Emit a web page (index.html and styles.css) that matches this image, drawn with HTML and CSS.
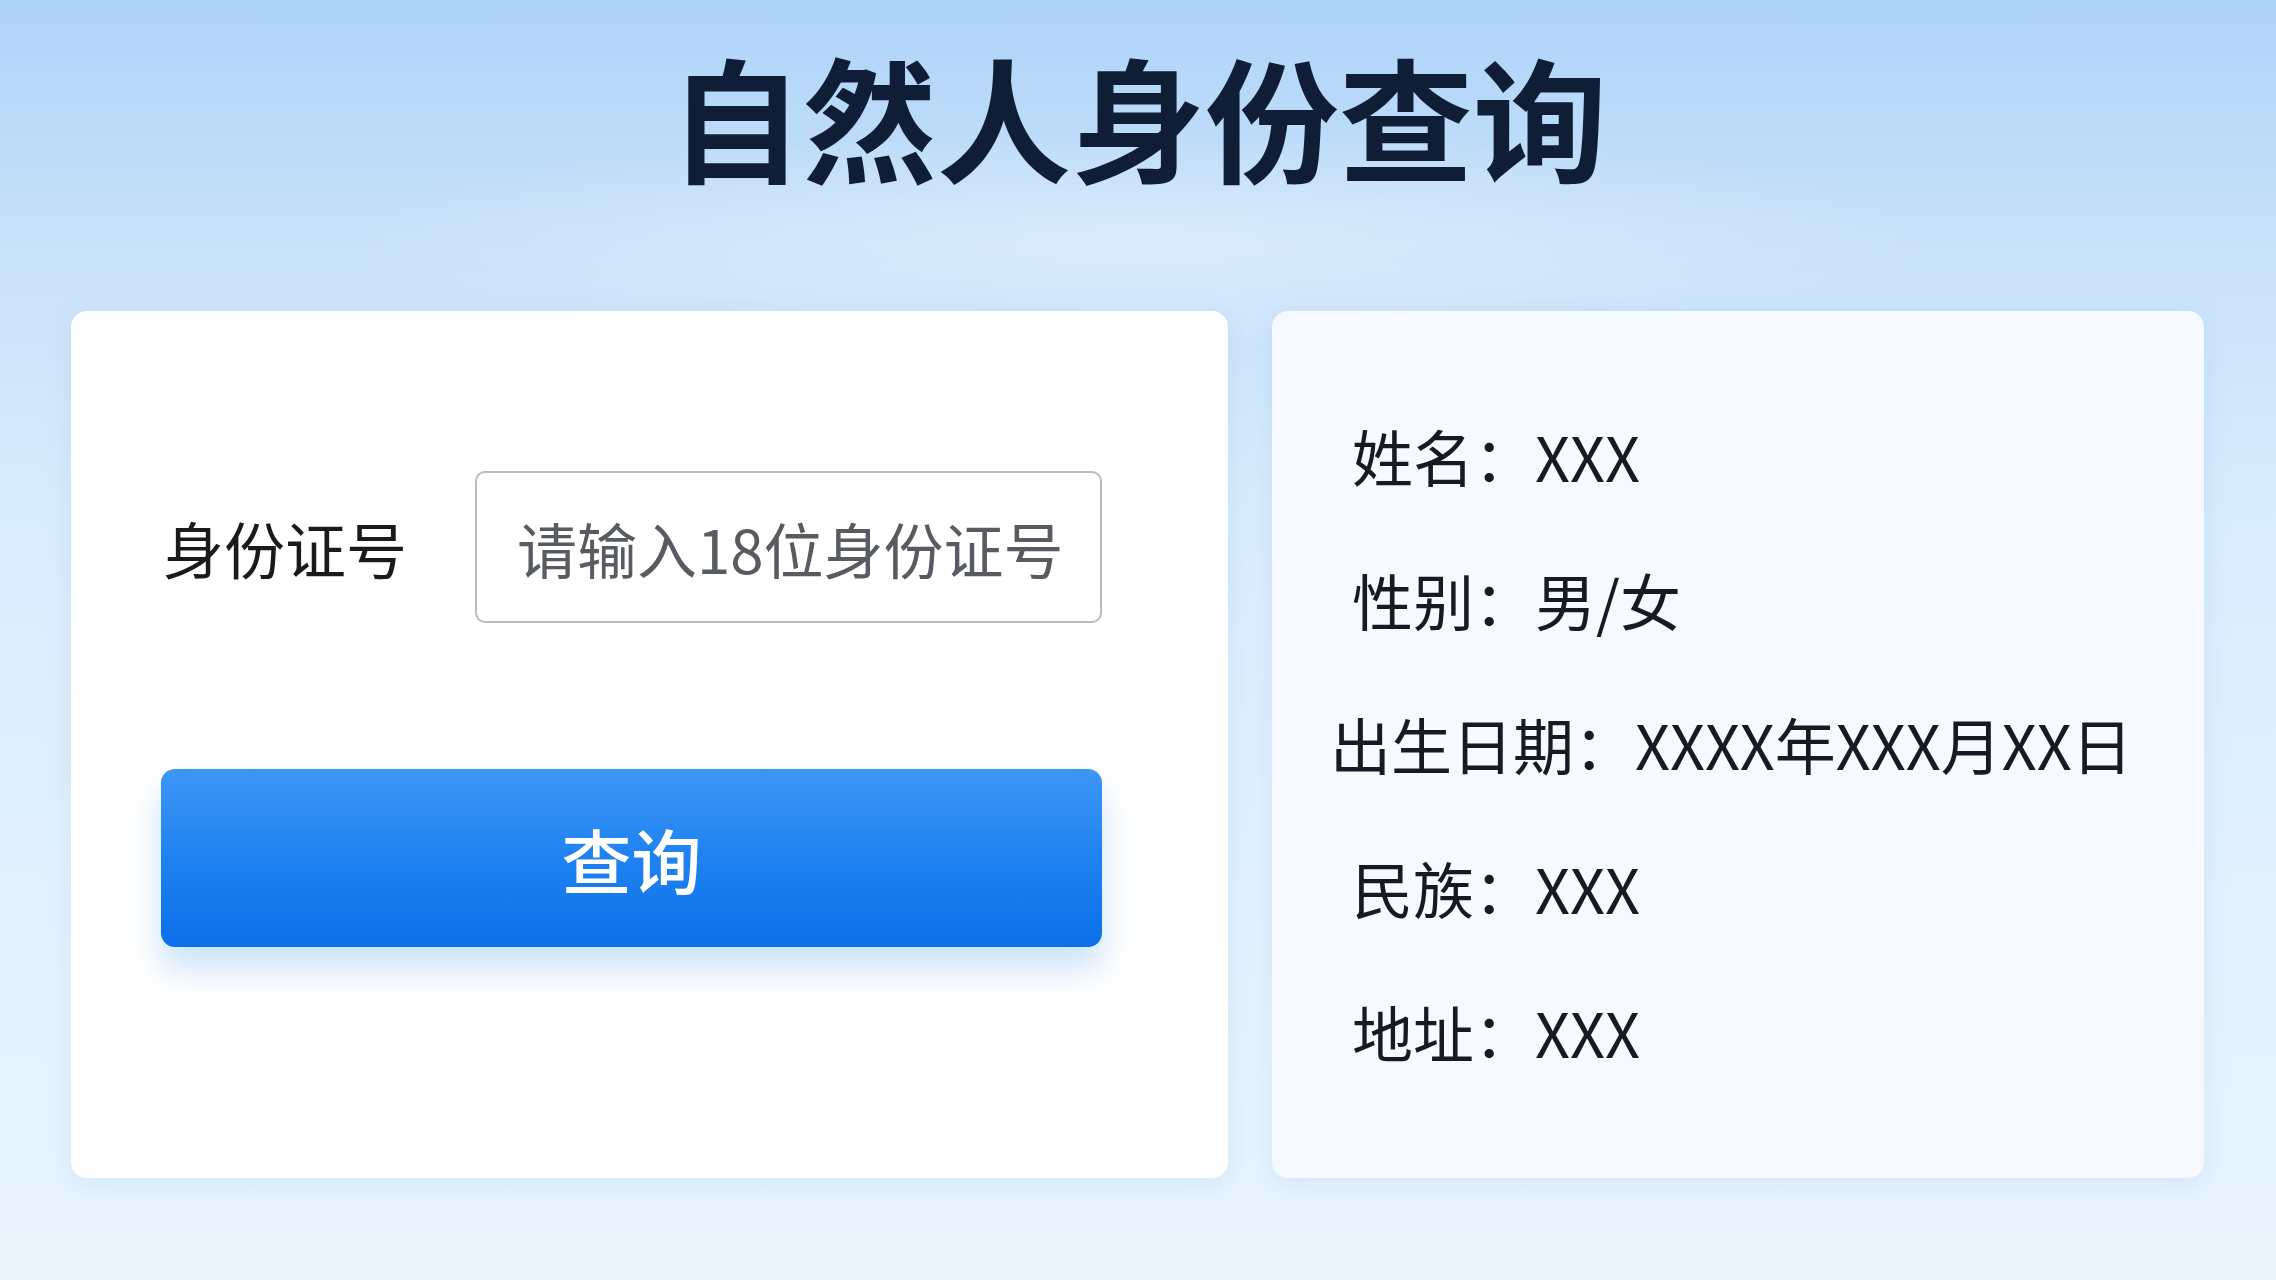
FILE: index.html
```html
<!DOCTYPE html>
<html lang="zh-CN">
<head>
  <meta charset="UTF-8">
  <title>自然人身份查询</title>
  <meta name="viewport" content="width=device-width, initial-scale=1.0">
  <link rel="stylesheet" href="styles.css">
</head>
<body>

  <h1 class="title">自然人身份查询</h1>

  <div class="cards">
    <div class="card card-form">
      <div class="form-row">
        <label for="id_no">身份证号</label>
        <input type="text" id="id_no" placeholder="请输入18位身份证号">
      </div>
      <button class="btn-query">查询</button>
    </div>

    <div class="card card-info">
      <div class="info-row">姓名：XXX</div>
      <div class="info-row">性别：男/女</div>
      <div class="info-row info-wide">出生日期：XXXX年XXX月XX日</div>
      <div class="info-row">民族：XXX</div>
      <div class="info-row">地址：XXX</div>
    </div>
  </div>

</body>
</html>
```

FILE: styles.css
```css
html, body {
  margin: 0;
  height: 100%;
}

body {
  width: 2276px;
  height: 1280px;
  overflow: hidden;
  font-family: "Noto Sans CJK SC", "Noto Sans", sans-serif;
  color: #1b1f27;
  background:
    radial-gradient(ellipse 800px 110px at 1140px 240px, rgba(255, 255, 255, 0.35), rgba(255, 255, 255, 0)),
    linear-gradient(180deg, #aed3f8 0%, #c6e1fa 18%, #d9ecfc 40%, #e3f1fd 70%, #e9f4fd 100%);
}

.title {
  margin: 0;
  padding-top: 25px;
  text-align: center;
  font-size: 134px;
  line-height: 180px;
  font-weight: 700;
  color: #0f1d36;
}

.cards {
  display: grid;
  grid-template-columns: 1157px 932px;
  gap: 44px;
  padding: 0 72px 0 71px;
  margin-top: 106px;
}

.card {
  height: 867px;
  box-sizing: border-box;
  border-radius: 16px;
  box-shadow: 0 6px 24px rgba(120, 170, 220, 0.18);
}

.card-form {
  background-color: #ffffff;
  padding: 160px 126px 0 90px;
}

.form-row {
  display: flex;
  align-items: center;
  height: 152px;
}

.form-row label {
  flex: none;
  width: 314px;
  padding-left: 2px;
  box-sizing: border-box;
  font-size: 61px;
  color: #1a1a1a;
}

.form-row input {
  flex: 1 1 0;
  min-width: 0;
  height: 152px;
  box-sizing: border-box;
  padding: 0 16px 0 40px;
  font-family: inherit;
  font-size: 60px;
  color: #333;
  background-color: #ffffff;
  border: 2px solid #b9bcc2;
  border-radius: 10px;
  outline: none;
}

.form-row input::placeholder {
  color: #585b62;
}

.btn-query {
  display: block;
  width: 100%;
  height: 178px;
  margin-top: 146px;
  font-family: inherit;
  font-size: 70px;
  font-weight: 500;
  color: #ffffff;
  background: linear-gradient(180deg, #3f97f6 0%, #1f82f1 50%, #0b70e9 100%);
  border: none;
  border-radius: 14px;
  box-shadow: 0 22px 34px rgba(70, 150, 230, 0.28);
  cursor: pointer;
}

.card-info {
  background-color: #f6fafe;
  padding: 73px 40px 0 80px;
}

.info-row {
  font-size: 61px;
  line-height: 144px;
  white-space: nowrap;
  color: #161a22;
}

.info-wide {
  margin-left: -22px;
}
```
